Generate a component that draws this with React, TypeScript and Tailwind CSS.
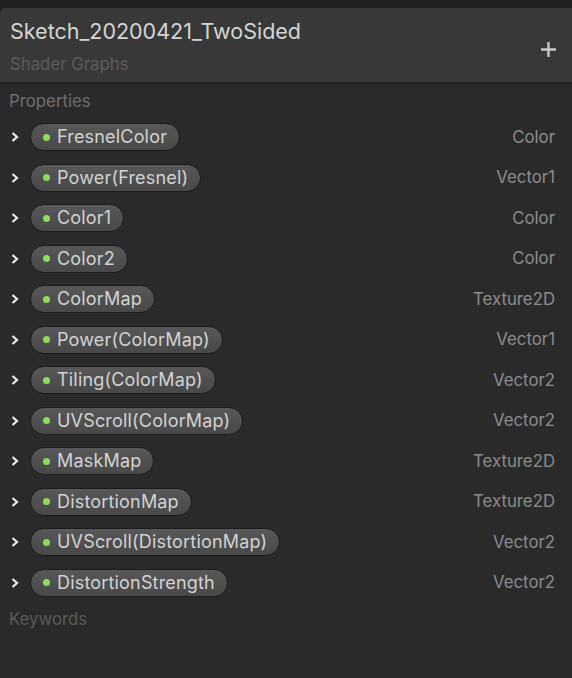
const properties = [
  { name: "FresnelColor", type: "Color" },
  { name: "Power(Fresnel)", type: "Vector1" },
  { name: "Color1", type: "Color" },
  { name: "Color2", type: "Color" },
  { name: "ColorMap", type: "Texture2D" },
  { name: "Power(ColorMap)", type: "Vector1" },
  { name: "Tiling(ColorMap)", type: "Vector2" },
  { name: "UVScroll(ColorMap)", type: "Vector2" },
  { name: "MaskMap", type: "Texture2D" },
  { name: "DistortionMap", type: "Texture2D" },
  { name: "UVScroll(DistortionMap)", type: "Vector2" },
  { name: "DistortionStrength", type: "Vector2" },
];

function Chevron() {
  return (
    <svg width="10" height="12" viewBox="0 0 10 12" className="shrink-0">
      <path
        d="M2.5 2 L7 6 L2.5 10"
        fill="none"
        stroke="#ececec"
        strokeWidth="2.2"
      />
    </svg>
  );
}

function PropertyRow({ name, type }: { name: string; type: string }) {
  return (
    <div className="flex h-[40.5px] items-center pl-[10px] pr-[17px]">
      <Chevron />
      <div className="ml-[10px] flex h-[28px] items-center rounded-full border border-[#1c1c1c] bg-gradient-to-b from-[#585858] to-[#484848] pl-[12px] pr-[12px]">
        <span className="h-[7px] w-[7px] rounded-full bg-[#8fdc5a]" />
        <span className="ml-[7px] text-[18px] leading-none tracking-[0.01em] text-[#d2d2d2]">
          {name}
        </span>
      </div>
      <span className="ml-auto text-[16.8px] text-[#8c8c8c]">
        {type}
      </span>
    </div>
  );
}

export default function App() {
  return (
    <main
      className="flex h-[678px] w-[572px] flex-col bg-[#202020] pt-[8px]"
      style={{ fontFamily: "Inter, 'Noto Sans', sans-serif" }}
    >
      <div className="flex flex-1 flex-col rounded-tl-[6px] bg-[#2a2a2a]">

        <header className="flex h-[76px] justify-between rounded-tl-[6px] border-b-2 border-[#222222] bg-[#383838] pl-[10px] pr-[16px] pt-[10px]">
          <div className="flex flex-col">
            <h1 className="text-[21.5px] leading-[26px] text-[#d4d4d4]">
              Sketch_20200421_TwoSided
            </h1>
            <p className="mt-[10px] text-[16.8px] leading-[20px] text-[#5c5c5c]">
              Shader Graphs
            </p>
          </div>
          <svg width="15" height="15" viewBox="0 0 15 15" className="mt-[24px]">
            <path d="M7.5 0 V15 M0 7.5 H15" stroke="#c8c8c8" strokeWidth="2.4" />
          </svg>
        </header>

        <p className="pl-[9px] pt-[7px] text-[16.8px] leading-[20px] text-[#6e6e6e]">
          Properties
        </p>

        <div className="mt-[6px] flex flex-col">
          {properties.map((p) => (
            <PropertyRow key={p.name} name={p.name} type={p.type} />
          ))}
        </div>

        <p className="mt-[6px] pl-[9px] text-[16.8px] leading-[20px] text-[#5a5a5a]">
          Keywords
        </p>

      </div>
    </main>
  );
}
